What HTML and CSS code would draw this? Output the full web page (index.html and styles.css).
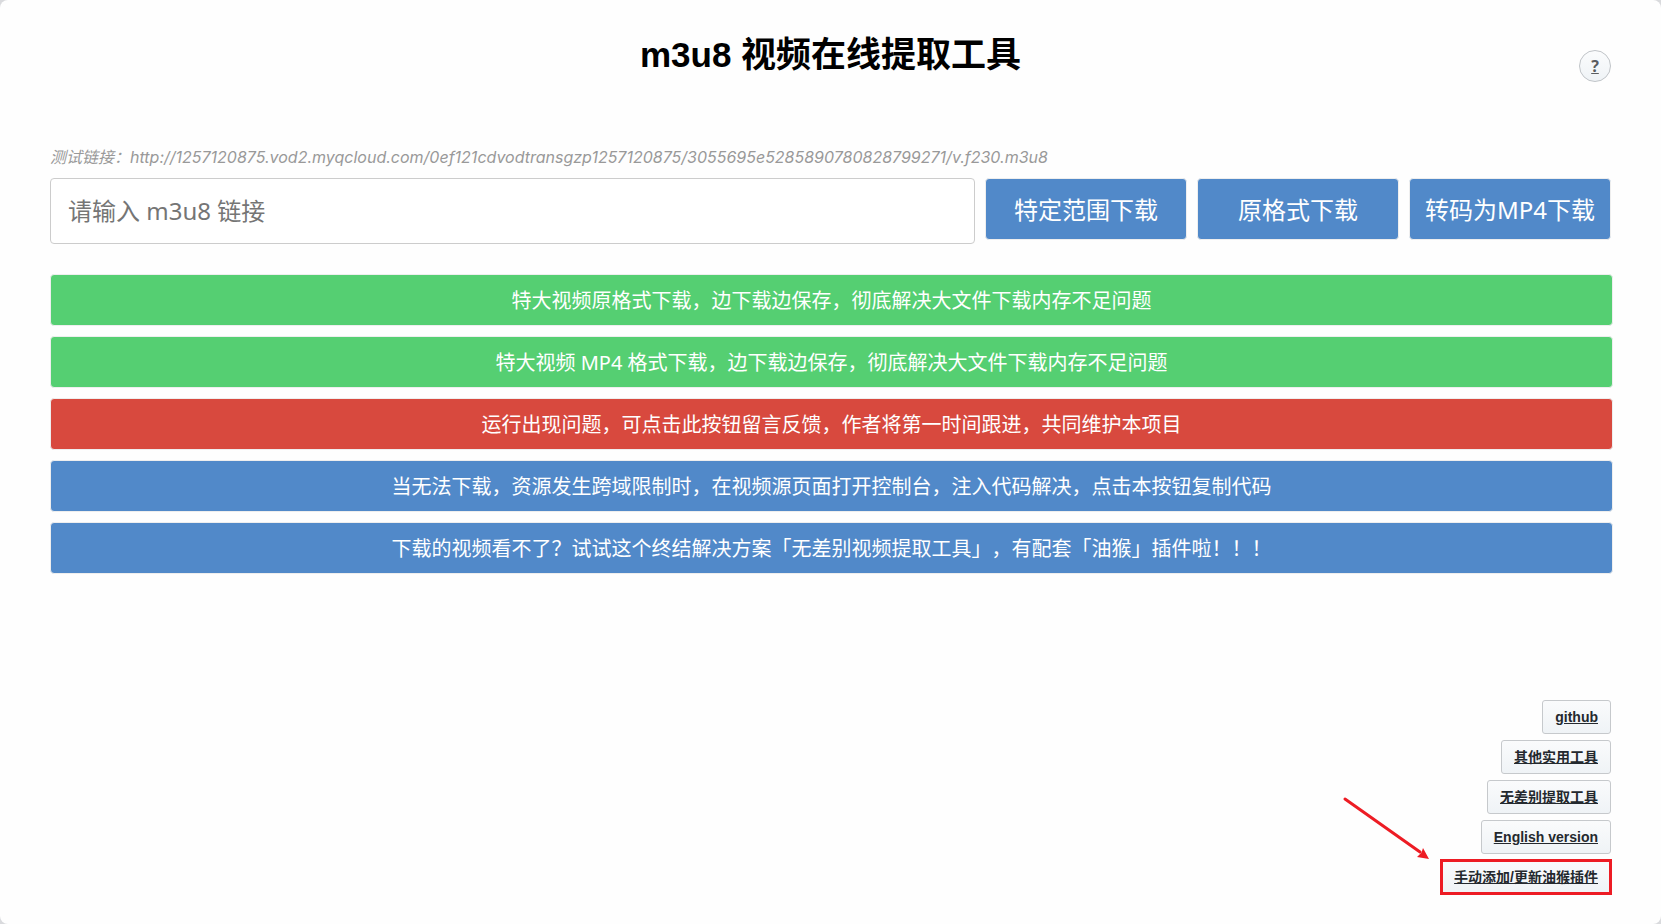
FILE: index.html
```html
<!DOCTYPE html>
<html lang="zh-CN">
<head>
<meta charset="utf-8">
<meta name="viewport" content="width=device-width, initial-scale=1">
<title>m3u8 视频在线提取工具</title>
<link rel="stylesheet" href="styles.css">
</head>
<body>
<div class="page">
  <header class="header">
    <h1 class="title">m3u8 视频在线提取工具</h1>
    <a class="help" href="#help">?</a>
  </header>
  <main>
    <label class="hint" for="url">测试链接：http://1257120875.vod2.myqcloud.com/0ef121cdvodtransgzp1257120875/3055695e5285890780828799271/v.f230.m3u8</label>
    <div class="form">
      <input class="url" id="url" type="text" placeholder="请输入 m3u8 链接">
      <button class="action" type="button">特定范围下载</button>
      <button class="action" type="button">原格式下载</button>
      <button class="action" type="button">转码为MP4下载</button>
    </div>
    <div class="bars">
      <button class="bar bar-green" type="button">特大视频原格式下载，边下载边保存，彻底解决大文件下载内存不足问题</button>
      <button class="bar bar-green" type="button">特大视频 MP4 格式下载，边下载边保存，彻底解决大文件下载内存不足问题</button>
      <button class="bar bar-red" type="button">运行出现问题，可点击此按钮留言反馈，作者将第一时间跟进，共同维护本项目</button>
      <button class="bar" type="button">当无法下载，资源发生跨域限制时，在视频源页面打开控制台，注入代码解决，点击本按钮复制代码</button>
      <button class="bar" type="button">下载的视频看不了？试试这个终结解决方案「无差别视频提取工具」，有配套「油猴」插件啦！！！</button>
    </div>
  </main>
  <nav class="links">
    <a class="link" href="#github">github</a>
    <a class="link" href="#tools">其他实用工具</a>
    <a class="link" href="#extract">无差别提取工具</a>
    <a class="link" href="#english">English version</a>
    <div class="marked">
      <a class="link" href="#plugin">手动添加/更新油猴插件</a>
      <svg class="arrow" width="86" height="64" viewBox="0 0 86 64" aria-hidden="true">
        <path d="M2 3 L77 56" stroke="#ed1c24" stroke-width="3" stroke-linecap="round" fill="none"/>
        <path d="M86 63 L80 52 L78.500 56.500 L74 61 Z" fill="#ed1c24"/>
      </svg>
    </div>
  </nav>
</div>
</body>
</html>
```
FILE: styles.css
```css
* {
  box-sizing: border-box;
}

body {
  margin: 0;
  background: #d9dadd;
  font-family: "Noto Sans", "Noto Sans CJK SC", sans-serif;
  text-spacing-trim: space-all;
}

.page {
  display: flex;
  flex-direction: column;
  min-height: 100vh;
  padding: 30px 50px;
  border-radius: 8px;
  background: #fefefe;
}

.header {
  display: grid;
  grid-template-columns: 1fr auto 1fr;
  margin-bottom: 65px;
}

.title {
  grid-column: 2;
  margin: 0;
  font-family: "Liberation Sans", "Noto Sans CJK SC", sans-serif;
  font-size: 35px;
  line-height: 50px;
  color: #000;
}

.help {
  justify-self: end;
  width: 32px;
  height: 32px;
  margin-top: 20px;
  border: 1px solid #c0c4c8;
  border-radius: 50%;
  background: linear-gradient(#fbfcfd, #eff3f6);
  color: #5a5d60;
  font-size: 16px;
  font-weight: 700;
  line-height: 30px;
  text-align: center;
}

.hint {
  display: block;
  margin-bottom: 11px;
  color: #999;
  font-family: Inter, "Noto Sans CJK SC", sans-serif;
  font-size: 16px;
  font-style: italic;
  line-height: 20px;
}

.form {
  display: flex;
  align-items: flex-start;
  gap: 10px;
  margin-bottom: 30px;
}

.url {
  flex: 1;
  min-width: 0;
  height: 66px;
  padding: 0 17px 2px;
  border: 1px solid #ccc;
  border-radius: 4px;
  background: #fff;
  color: #333;
  font: 24px "Noto Sans", "Noto Sans CJK SC", sans-serif;
}

.url::placeholder {
  color: #757575;
}

.action,
.bar {
  padding: 0 0 2px;
  border: 1px solid #eee;
  border-radius: 4px;
  background: #5189c9;
  color: #fff;
  font-family: inherit;
  text-spacing-trim: inherit;
}

.action {
  width: 202px;
  height: 62px;
  font-size: 24px;
}

.bars {
  display: grid;
  gap: 10px;
  margin-right: -2px;
}

.bar {
  height: 52px;
  font-size: 20px;
}

.bar-green {
  background: #55cf72;
}

.bar-red {
  background: #d8493e;
}

.links {
  display: flex;
  flex-direction: column;
  align-items: flex-end;
  gap: 6px;
  margin-top: auto;
}

.link {
  display: block;
  padding: 0 12px;
  border: 1px solid #c6c9cc;
  border-radius: 3px;
  background: linear-gradient(#fafbfc, #eff3f6);
  color: #24292e;
  font-family: "Liberation Sans", "Noto Sans CJK SC", sans-serif;
  font-size: 14px;
  font-weight: 700;
  line-height: 32px;
}

.marked {
  position: relative;
}

.marked::after {
  content: "";
  position: absolute;
  inset: -1px;
  border: 3px solid #ed1c24;
  pointer-events: none;
}

.arrow {
  position: absolute;
  right: 100%;
  bottom: 100%;
  margin-right: 12px;
}
```
